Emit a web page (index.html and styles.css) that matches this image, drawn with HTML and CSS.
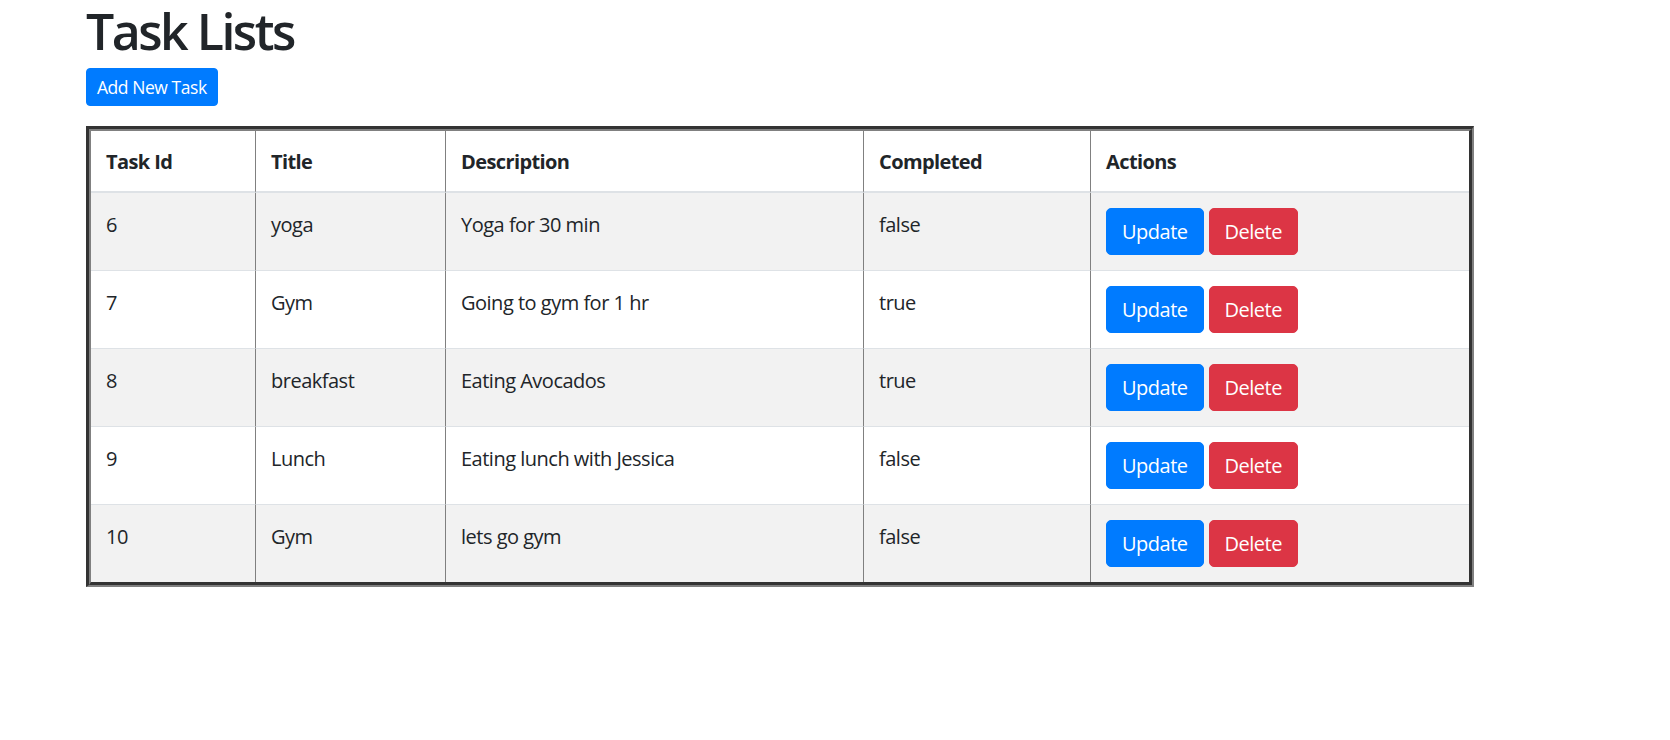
FILE: index.html
```html
<!DOCTYPE html>
<html lang="en">
<head>
<meta charset="utf-8">
<title>Task Lists</title>
<link rel="stylesheet" href="styles.css">
</head>
<body>
<div class="page">
  <h1 class="title">Task Lists</h1>
  <button class="btn btn-primary btn-sm">Add New Task</button>
  <div class="frame">
    <table class="tasks">
      <thead>
        <tr>
          <th class="c-id">Task Id</th>
          <th class="c-title">Title</th>
          <th class="c-desc">Description</th>
          <th class="c-done">Completed</th>
          <th class="c-act">Actions</th>
        </tr>
      </thead>
      <tbody>
        <tr class="striped">
          <td>6</td><td>yoga</td><td>Yoga for 30 min</td><td>false</td>
          <td><div class="actions"><button class="btn btn-primary">Update</button><button class="btn btn-danger">Delete</button></div></td>
        </tr>
        <tr>
          <td>7</td><td>Gym</td><td>Going to gym for 1 hr</td><td>true</td>
          <td><div class="actions"><button class="btn btn-primary">Update</button><button class="btn btn-danger">Delete</button></div></td>
        </tr>
        <tr class="striped">
          <td>8</td><td>breakfast</td><td>Eating Avocados</td><td>true</td>
          <td><div class="actions"><button class="btn btn-primary">Update</button><button class="btn btn-danger">Delete</button></div></td>
        </tr>
        <tr>
          <td>9</td><td>Lunch</td><td>Eating lunch with Jessica</td><td>false</td>
          <td><div class="actions"><button class="btn btn-primary">Update</button><button class="btn btn-danger">Delete</button></div></td>
        </tr>
        <tr class="striped">
          <td>10</td><td>Gym</td><td>lets go gym</td><td>false</td>
          <td><div class="actions"><button class="btn btn-primary">Update</button><button class="btn btn-danger">Delete</button></div></td>
        </tr>
      </tbody>
    </table>
  </div>
</div>
</body>
</html>
```

FILE: styles.css
```css
* { box-sizing: border-box; }

html, body {
  margin: 0;
  padding: 0;
  background: #fff;
}

body {
  font-family: "Segoe UI", "Open Sans", "Noto Sans", sans-serif;
  font-size: 20px;
  line-height: 30px;
  letter-spacing: -0.5px;
  color: #212529;
}

.page {
  padding-left: 86px;
  padding-top: 2px;
}

.title {
  margin: 0 0 8px;
  font-size: 50px;
  line-height: 58px;
  font-weight: 600;
  letter-spacing: -2.5px;
  color: #212529;
}

.btn {
  display: inline-block;
  font-family: inherit;
  font-size: 20px;
  line-height: 30px;
  font-weight: 400;
  letter-spacing: -0.5px;
  color: #fff;
  padding: 7.5px 15px;
  border: 1px solid transparent;
  border-radius: 5px;
  cursor: pointer;
}

.btn-sm {
  font-size: 17.5px;
  line-height: 26px;
  letter-spacing: -0.45px;
  padding: 5px 10px;
  border-radius: 4px;
}

.btn-primary {
  background: #007bff;
  border-color: #007bff;
}

.btn-danger {
  background: #dc3545;
  border-color: #dc3545;
}

.frame {
  width: 1388px;
  margin-top: 20px;
  border-style: solid;
  border-color: #333 #808080 #808080 #333;
  border-width: 3px 2px 2px 3px;
}

.tasks {
  width: 100%;
  table-layout: fixed;
  border-collapse: separate;
  border-spacing: 0;
  border-style: solid;
  border-color: #808080 #333 #333 #808080;
  border-width: 2px 3px 3px 2px;
}

.tasks th,
.tasks td {
  padding: 15px;
  text-align: left;
  vertical-align: top;
  border-left: 1px solid #808080;
}

.tasks td {
  line-height: 34px;
}

.tasks th:first-child,
.tasks td:first-child {
  border-left: none;
}

.tasks th {
  font-weight: 700;
  letter-spacing: -0.6px;
  line-height: 32px;
  padding-bottom: 13px;
  border-bottom: 2px solid #dee2e6;
}

.tasks tbody tr + tr td {
  border-top: 1px solid #dee2e6;
}

.tasks tr.striped td {
  background: #f2f2f2;
}

.c-id { width: 164px; }
.c-title { width: 190px; }
.c-desc { width: 418px; }
.c-done { width: 227px; }

.actions {
  display: flex;
  gap: 5px;
}
```
